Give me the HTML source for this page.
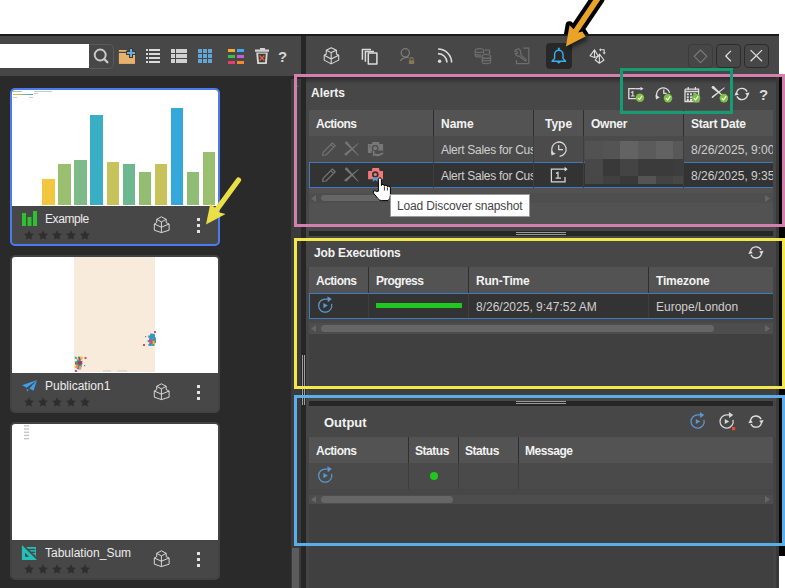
<!DOCTYPE html>
<html><head><meta charset="utf-8">
<style>
*{box-sizing:border-box;margin:0;padding:0}
html,body{width:785px;height:588px;overflow:hidden;background:#fff;position:relative;font-family:"Liberation Sans",sans-serif}
.a{position:absolute}
.t{position:absolute;white-space:nowrap;line-height:1}
svg{position:absolute;overflow:visible}
.hd{position:absolute;white-space:nowrap;line-height:1;font-weight:bold;font-size:12px;color:#f2f2f2}
.cell{position:absolute;white-space:nowrap;line-height:1;font-size:12px;color:#cfcfcf}
.sep{position:absolute;width:1px;background:#2f2f2f}
.star{position:absolute;font-size:11px;color:#2f2f2f;line-height:1}
</style></head><body>

<!-- top dark line -->
<div class="a" style="left:0;top:34px;width:779px;height:2px;background:#1c1c1c"></div>
<!-- left toolbar -->
<div class="a" style="left:0;top:36px;width:301px;height:40px;background:#474747"></div>
<!-- left panel -->
<div class="a" style="left:0;top:76px;width:291px;height:512px;background:#2a2a2a"></div>
<!-- left panel scroll strip -->
<div class="a" style="left:291px;top:76px;width:10px;height:3px;background:#262626"></div>
<div class="a" style="left:291px;top:79px;width:10px;height:509px;background:#3b3b3b"></div>
<svg style="left:293px;top:83px" width="6" height="5"><path d="M0 4 L3 0.5 L6 4Z" fill="#5a5a5a"/></svg>
<div class="a" style="left:292px;top:548px;width:7px;height:40px;background:#5c5c5c"></div>
<!-- divider -->
<div class="a" style="left:301px;top:36px;width:5px;height:552px;background:#262626"></div>
<!-- right toolbar -->
<div class="a" style="left:306px;top:36px;width:473px;height:40px;background:#474747"></div>
<!-- right black strip -->
<div class="a" style="left:779px;top:74px;width:6px;height:482px;background:#050505"></div>

<!-- right panel bg -->
<div class="a" style="left:306px;top:76px;width:473px;height:512px;background:#404040"></div>
<div class="a" style="left:776px;top:76px;width:3px;height:512px;background:#393939"></div>
<div class="a" style="left:306px;top:76px;width:3px;height:512px;background:#454545"></div>
<div class="a" style="left:773px;top:76px;width:3px;height:512px;background:#444"></div>

<!-- ============ ALERTS PANEL ============ -->
<div class="a" style="left:306px;top:77px;width:470px;height:154px;background:#474747"></div>
<div class="a" style="left:306px;top:77px;width:470px;height:7px;background:linear-gradient(#2c2c2c,#474747)"></div>
<div class="hd" style="left:311px;top:87px;font-size:12px">Alerts</div>
<!-- table -->
<div class="a" style="left:309px;top:110px;width:464px;height:26px;background:#535353"></div>
<div class="a" style="left:309px;top:136px;width:464px;height:26px;background:#4b4b4b"></div>
<div class="a" style="left:309px;top:162px;width:464px;height:26px;background:#333;border:1px solid #3d7bc0;border-right:none"></div>
<div class="a" style="left:309px;top:188px;width:464px;height:39px;background:#525252"></div>
<div class="a" style="left:309px;top:193px;width:464px;height:10px;background:#4e4e4e"></div>
<div class="a" style="left:321px;top:195px;width:120px;height:6px;background:#666;border-radius:3px"></div>
<svg style="left:311px;top:195px" width="6" height="7"><path d="M5 0 L0 3.5 L5 7Z" fill="#666"/></svg>
<svg style="left:765px;top:195px" width="6" height="7"><path d="M0 0 L5 3.5 L0 7Z" fill="#666"/></svg>

<div class="sep" style="left:433px;top:110px;height:26px"></div>
<div class="sep" style="left:533px;top:110px;height:26px"></div>
<div class="sep" style="left:583px;top:110px;height:26px"></div>
<div class="sep" style="left:683px;top:110px;height:26px"></div>
<div class="sep" style="left:433px;top:136px;height:52px;background:#3e3e3e"></div>
<div class="sep" style="left:533px;top:136px;height:52px;background:#3e3e3e"></div>
<div class="sep" style="left:583px;top:136px;height:52px;background:#3e3e3e"></div>
<div class="sep" style="left:683px;top:136px;height:52px;background:#3e3e3e"></div>

<div class="hd" style="left:316px;top:118px;letter-spacing:-0.5px">Actions</div>
<div class="hd" style="left:441px;top:118px">Name</div>
<div class="hd" style="left:545px;top:118px">Type</div>
<div class="hd" style="left:591px;top:118px;letter-spacing:-0.25px">Owner</div>
<div class="hd" style="left:691px;top:118px;letter-spacing:-0.2px">Start Date</div>

<div class="a" style="left:434px;top:136px;width:99px;height:52px;overflow:hidden">
  <div class="cell" style="left:7px;top:8px;letter-spacing:-0.28px">Alert Sales for Customers</div>
  <div class="cell" style="left:7px;top:34px;letter-spacing:-0.28px">Alert Sales for Customers</div>
</div>
<div class="a" style="left:684px;top:136px;width:89px;height:52px;overflow:hidden">
  <div class="cell" style="left:7px;top:8px">8/26/2025, 9:00 AM</div>
  <div class="cell" style="left:7px;top:34px">8/26/2025, 9:35 AM</div>
</div>
<!-- owner mosaic -->
<div class="a" style="left:585px;top:141px;width:18px;height:18px;background:#525252"></div>
<div class="a" style="left:603px;top:141px;width:17px;height:18px;background:#545454"></div>
<div class="a" style="left:620px;top:141px;width:18px;height:18px;background:#636363"></div>
<div class="a" style="left:638px;top:141px;width:18px;height:18px;background:#5b5b5b"></div>
<div class="a" style="left:656px;top:141px;width:17px;height:18px;background:#626262"></div>
<div class="a" style="left:673px;top:141px;width:10px;height:18px;background:#585858"></div>
<div class="a" style="left:585px;top:159px;width:18px;height:17px;background:#484848"></div>
<div class="a" style="left:603px;top:159px;width:17px;height:17px;background:#393939"></div>
<div class="a" style="left:620px;top:159px;width:18px;height:17px;background:#444444"></div>
<div class="a" style="left:638px;top:159px;width:18px;height:17px;background:#3b3b3b"></div>
<div class="a" style="left:656px;top:159px;width:17px;height:17px;background:#3b3b3b"></div>
<div class="a" style="left:673px;top:159px;width:10px;height:17px;background:#3d3d3d"></div>
<div class="a" style="left:585px;top:176px;width:18px;height:8px;background:#474747"></div>
<div class="a" style="left:603px;top:176px;width:17px;height:8px;background:#404040"></div>
<div class="a" style="left:620px;top:176px;width:18px;height:8px;background:#393939"></div>
<div class="a" style="left:638px;top:176px;width:18px;height:8px;background:#545454"></div>
<div class="a" style="left:656px;top:176px;width:17px;height:8px;background:#434343"></div>
<div class="a" style="left:673px;top:176px;width:10px;height:8px;background:#474747"></div>

<!-- ============ SPLITTER 1 ============ -->
<div class="a" style="left:309px;top:231px;width:464px;height:5px;background:#262626"></div>
<div class="a" style="left:516px;top:232px;width:50px;height:1px;background:#9a9a9a"></div>
<div class="a" style="left:516px;top:234px;width:50px;height:1px;background:#9a9a9a"></div>

<!-- ============ JOB PANEL ============ -->
<div class="a" style="left:306px;top:236px;width:470px;height:31px;background:#474747"></div>
<div class="hd" style="left:314px;top:247px;font-size:12px;letter-spacing:-0.15px">Job Executions</div>
<div class="a" style="left:309px;top:267px;width:464px;height:26px;background:#535353"></div>
<div class="a" style="left:309px;top:293px;width:464px;height:26px;background:#333;border:1px solid #3d7bc0;border-right:none"></div>
<div class="a" style="left:309px;top:319px;width:464px;height:4px;background:#474747"></div>
<div class="a" style="left:309px;top:323px;width:464px;height:11px;background:#4d4d4d"></div>
<div class="a" style="left:321px;top:325px;width:393px;height:7px;background:#666;border-radius:3.5px"></div>
<svg style="left:311px;top:325px" width="6" height="7"><path d="M5 0 L0 3.5 L5 7Z" fill="#666"/></svg>
<svg style="left:765px;top:325px" width="6" height="7"><path d="M0 0 L5 3.5 L0 7Z" fill="#666"/></svg>
<div class="sep" style="left:368px;top:267px;height:26px"></div>
<div class="sep" style="left:468px;top:267px;height:26px"></div>
<div class="sep" style="left:648px;top:267px;height:26px"></div>
<div class="sep" style="left:368px;top:294px;height:24px;background:#3e3e3e"></div>
<div class="sep" style="left:468px;top:294px;height:24px;background:#3e3e3e"></div>
<div class="sep" style="left:648px;top:294px;height:24px;background:#3e3e3e"></div>
<div class="hd" style="left:316px;top:275px;letter-spacing:-0.5px">Actions</div>
<div class="hd" style="left:376px;top:275px;letter-spacing:-0.6px">Progress</div>
<div class="hd" style="left:476px;top:275px;letter-spacing:-0.2px">Run-Time</div>
<div class="hd" style="left:656px;top:275px;letter-spacing:-0.2px">Timezone</div>
<div class="a" style="left:376px;top:303px;width:86px;height:5px;background:#1ec81e"></div>
<div class="cell" style="left:476px;top:301px">8/26/2025, 9:47:52 AM</div>
<div class="cell" style="left:656px;top:301px">Europe/London</div>

<div class="a" style="left:302px;top:355px;width:1px;height:50px;background:#a0a0a0"></div>
<div class="a" style="left:304px;top:355px;width:1px;height:50px;background:#a0a0a0"></div>
<!-- ============ SPLITTER 2 ============ -->
<div class="a" style="left:306px;top:398px;width:470px;height:3px;background:#474747"></div>
<div class="a" style="left:309px;top:401px;width:464px;height:5px;background:#262626"></div>
<div class="a" style="left:516px;top:401px;width:50px;height:1px;background:#9a9a9a"></div>
<div class="a" style="left:516px;top:403px;width:50px;height:1px;background:#9a9a9a"></div>

<!-- ============ OUTPUT PANEL ============ -->
<div class="a" style="left:306px;top:406px;width:470px;height:31px;background:#474747"></div>
<div class="hd" style="left:324px;top:416px;font-size:13px">Output</div>
<div class="a" style="left:309px;top:437px;width:464px;height:26px;background:#535353"></div>
<div class="a" style="left:309px;top:463px;width:464px;height:26px;background:#4a4a4a"></div>
<div class="a" style="left:309px;top:489px;width:464px;height:6px;background:#474747"></div>
<div class="a" style="left:309px;top:495px;width:464px;height:9px;background:#4d4d4d"></div>
<div class="a" style="left:321px;top:496px;width:132px;height:7px;background:#666;border-radius:3.5px"></div>
<svg style="left:311px;top:496px" width="6" height="7"><path d="M5 0 L0 3.5 L5 7Z" fill="#666"/></svg>
<svg style="left:765px;top:496px" width="6" height="7"><path d="M0 0 L5 3.5 L0 7Z" fill="#666"/></svg>
<div class="sep" style="left:408px;top:437px;height:26px"></div>
<div class="sep" style="left:458px;top:437px;height:26px"></div>
<div class="sep" style="left:518px;top:437px;height:26px"></div>
<div class="sep" style="left:408px;top:463px;height:26px;background:#3e3e3e"></div>
<div class="sep" style="left:458px;top:463px;height:26px;background:#3e3e3e"></div>
<div class="sep" style="left:518px;top:463px;height:26px;background:#3e3e3e"></div>
<div class="hd" style="left:316px;top:445px;letter-spacing:-0.5px">Actions</div>
<div class="hd" style="left:415px;top:445px;letter-spacing:-0.45px">Status</div>
<div class="hd" style="left:465px;top:445px;letter-spacing:-0.45px">Status</div>
<div class="hd" style="left:525px;top:445px;letter-spacing:-0.45px">Message</div>
<div class="a" style="left:430px;top:472px;width:8px;height:8px;border-radius:50%;background:#1ec81e"></div>


<!-- ============ PANEL ICONS ============ -->
<svg style="left:0;top:0" width="785" height="588">
 <!-- alerts header icons -->
 <g fill="none" stroke="#dedede" stroke-width="1.3">
  <path d="M635.3 88.7 H628.8 V98.6 H636"/>
  <path d="M635.3 88.7 H640.8"/>
  <path d="M631 92.4 L632.8 91.6 V96 M631 96 H634.6" stroke-width="1.1"/>
  <path d="M656.8 96.3 A6.6 6.6 0 1 1 669.6 92.8"/>
  <path d="M663.8 89.4 V93.3 H666.6"/>
  <path d="M685 89.2 V101.5 H698.6 V89.2 H685 M685 91.5 H698.6 M688.2 87 V90 M695.4 87 V90"/>
 </g>
 <path d="M640.5 86.8 L643.5 88.7 L640.5 90.6 Z" fill="#dedede"/>
 <path d="M655.4 95 L659.8 97.2 L656 99.6 Z" fill="#dedede"/>
 <g fill="#dedede">
  <rect x="686.8" y="93.3" width="2" height="2"/><rect x="690" y="93.3" width="2" height="2"/><rect x="693.2" y="93.3" width="3" height="1"/>
  <rect x="686.8" y="96.3" width="2" height="2"/><rect x="690" y="96.3" width="2" height="2"/>
  <rect x="686.8" y="99" width="2" height="2"/><rect x="690" y="99" width="2" height="2"/>
 </g>
 <!-- cancel schedule x -->
 <path d="M712.14 88.17 L723.17 96.87 L723.83 96.13 L713.86 86.23 Z" fill="#dedede"/><circle cx="713" cy="87.2" r="1.3" fill="#dedede"/>
 <path d="M712.89 97.83 L724.82 87.88 L724.38 87.32 L711.91 96.57 Z" fill="#dedede"/><circle cx="712.4" cy="97.2" r="0.8" fill="#dedede"/>
 <!-- badges -->
 <g>
  <circle cx="639.9" cy="97.8" r="4.3" fill="#7dc143"/>
  <circle cx="668" cy="98.1" r="4.3" fill="#7dc143"/>
  <circle cx="696" cy="98.1" r="4.3" fill="#7dc143"/>
  <circle cx="723.9" cy="98.1" r="4.3" fill="#7dc143"/>
 </g>
 <g fill="none" stroke="#fff" stroke-width="1.1">
  <path d="M637.8 97.8 L639.5 99.5 L642.2 95.8"/>
  <path d="M665.9 98.1 L667.6 99.8 L670.3 96.1"/>
  <path d="M693.9 98.1 L695.6 99.8 L698.3 96.1"/>
  <path d="M721.8 98.1 L723.5 99.8 L726.2 96.1"/>
 </g>
 <!-- refresh icons -->
 <path d="M736.59 92.55 A5.6 5.6 0 0 1 747.08 91.63 M747.41 95.45 A5.6 5.6 0 0 1 736.92 96.37" fill="none" stroke="#e0e0e0" stroke-width="1.3"/><path d="M745.20 93.20 L749.60 92.40 L747.80 96.40 Z" fill="#e0e0e0"/><path d="M738.80 94.80 L734.40 95.60 L736.20 91.60 Z" fill="#e0e0e0"/>
 <path d="M750.59 250.95 A5.6 5.6 0 0 1 761.08 250.03 M761.41 253.85 A5.6 5.6 0 0 1 750.92 254.77" fill="none" stroke="#e0e0e0" stroke-width="1.3"/><path d="M759.20 251.60 L763.60 250.80 L761.80 254.80 Z" fill="#e0e0e0"/><path d="M752.80 253.20 L748.40 254.00 L750.20 250.00 Z" fill="#e0e0e0"/>
 <path d="M750.59 420.15 A5.6 5.6 0 0 1 761.08 419.23 M761.41 423.05 A5.6 5.6 0 0 1 750.92 423.97" fill="none" stroke="#e0e0e0" stroke-width="1.3"/><path d="M759.20 420.80 L763.60 420.00 L761.80 424.00 Z" fill="#e0e0e0"/><path d="M752.80 422.40 L748.40 423.20 L750.20 419.20 Z" fill="#e0e0e0"/>

 <!-- row icons -->
 <g fill="none" stroke="#707070" stroke-width="1.25" stroke-linejoin="round">
  <path d="M322.6 155.4 L323.2 152.2 L332.4 143 L335.2 145.8 L326 155 Z M330.8 144.6 L333.6 147.4"/>
  <path d="M322.6 181.4 L323.2 178.2 L332.4 169 L335.2 171.8 L326 181 Z M330.8 170.6 L333.6 173.4"/>
 </g>
 <path d="M345.42 143.83 L358.15 155.84 L358.65 155.36 L347.38 141.97 Z" fill="#747474"/><circle cx="346.4" cy="142.9" r="1.35" fill="#747474"/>
 <path d="M346.62 155.24 L358.80 143.43 L358.40 142.97 L344.98 153.36 Z" fill="#747474"/><circle cx="345.8" cy="154.3" r="1.25" fill="#747474"/>
 <path d="M345.42 169.83 L358.15 181.84 L358.65 181.36 L347.38 167.97 Z" fill="#747474"/><circle cx="346.4" cy="168.9" r="1.35" fill="#747474"/>
 <path d="M346.62 181.24 L358.80 169.43 L358.40 168.97 L344.98 179.36 Z" fill="#747474"/><circle cx="345.8" cy="180.3" r="1.25" fill="#747474"/>
 <!-- camera row1 -->
 <path d="M367.9 144 H372 L372.4 141.9 H379 L379.4 144 H383.1 V153 H367.9 Z" fill="#777"/>
 <rect x="369" y="145.8" width="1.6" height="0.9" fill="#5a5a5a"/>
 <path d="M371.6 150.8 V158 L384.6 154.6 L382.6 150.6 Z" fill="#4d4d4d"/>
 <circle cx="375.2" cy="148.3" r="3.4" fill="#4d4d4d"/>
 <circle cx="375.2" cy="148.3" r="2" fill="#777"/>
 <path d="M372.9 150.5 V156.6 L374.3 155.4 Q379 157.6 383.8 153.6 L382.2 152.4 Q379 155 374.6 153.6 V151.2 Z" fill="#777"/>
 <!-- camera row2 -->
 <path d="M368.1 171 H371.8 L372.4 168.1 H379 L379.6 171 H383 V179.3 H368.1 Z" fill="#f07a7a"/>
 <circle cx="375.3" cy="174.5" r="3.3" fill="#333"/>
 <circle cx="375.3" cy="174.5" r="1.6" fill="#f07a7a"/>
 <path d="M372.8 177.3 H377.6 V181.8 L375.2 180 L372.8 181.8 Z" fill="#5a9ad0"/>

 <!-- type icons -->
 <g fill="none" stroke="#d8d8d8" stroke-width="1.25">
  <path d="M552.6 152.6 A7.2 7.2 0 1 1 559.6 156.4"/>
  <path d="M558.7 145 V149.6 H563"/>
  <path d="M563.8 169.2 H551.4 V181.8 H565 V177"/>
  <path d="M563.8 169.2 H566" />
  <path d="M556 173.4 L558 172.4 V178.2 M555.6 178.2 H561"/>
 </g>
 <path d="M550.8 151 L555.8 153.8 L551.6 155.6 Z" fill="#d8d8d8"/>
 <path d="M564.6 166.8 L567.6 169.2 L564.6 171.6 Z" fill="#e0e0e0"/>

 <!-- play-refresh icons -->
 <path d="M703.98 419.79 A6.6 6.6 0 1 1 698.18 414.93 H700.20" fill="none" stroke="#5b98cc" stroke-width="1.25"/><path d="M699.80 412.10 L704.20 414.90 L700.20 418.10 Z" fill="#5b98cc"/><path d="M695.80 418.90 L700.20 421.50 L695.80 424.10 Z" fill="#5b98cc"/>
 <path d="M732.98 419.79 A6.6 6.6 0 1 1 727.18 414.93 H729.20" fill="none" stroke="#d8d8d8" stroke-width="1.25"/><path d="M728.80 412.10 L733.20 414.90 L729.20 418.10 Z" fill="#d8d8d8"/><path d="M724.80 418.90 L729.20 421.50 L724.80 424.10 Z" fill="#d8d8d8"/>
 <path d="M331.58 303.89 A6.6 6.6 0 1 1 325.78 299.03 H327.80" fill="none" stroke="#5b98cc" stroke-width="1.25"/><path d="M327.40 296.20 L331.80 299.00 L327.80 302.20 Z" fill="#5b98cc"/><path d="M323.40 303.00 L327.80 305.60 L323.40 308.20 Z" fill="#5b98cc"/>
 <path d="M331.58 473.89 A6.6 6.6 0 1 1 325.78 469.03 H327.80" fill="none" stroke="#5b98cc" stroke-width="1.25"/><path d="M327.40 466.20 L331.80 469.00 L327.80 472.20 Z" fill="#5b98cc"/><path d="M323.40 473.00 L327.80 475.60 L323.40 478.20 Z" fill="#5b98cc"/>
 <rect x="732" y="427" width="3.2" height="3.2" fill="#f04a2a"/>

 <!-- hand cursor -->
 <path d="M378.4 191.2 V179.6 Q378.4 177.8 379.9 177.8 Q381.4 177.8 381.4 179.6 V185.6 Q381.6 184.4 382.9 184.4 Q384.3 184.4 384.4 186 Q384.6 185.2 385.9 185.2 Q387.3 185.2 387.4 186.8 Q387.6 186.2 388.8 186.2 Q390.4 186.2 390.4 188 V195.2 Q390.4 199 388 200.6 H381.4 Q379.6 200.6 377.6 198.2 L373.6 193.2 Q372.6 191.8 373.8 191 Q375.2 190.2 376.4 191.6 Z" fill="#fff" stroke="#000" stroke-width="1"/>
 <path d="M384.4 186.4 V190.5 M387.4 187.4 V190.5" stroke="#000" stroke-width="0.8"/>
</svg>

<!-- tooltip -->
<div class="a" style="left:390px;top:194px;width:140px;height:23px;background:#fff;border:1px solid #9a9a9a"></div>
<div class="t" style="left:397px;top:200px;font-size:12px;color:#444;letter-spacing:-0.15px">Load Discover snapshot</div>

<div class="t" style="left:759px;top:87px;font-size:15px;font-weight:bold;color:#dcdcdc">?</div>

<!-- ============ LEFT TOOLBAR ============ -->
<div class="a" style="left:0;top:44px;width:89px;height:24px;background:#fff"></div>
<div class="a" style="left:89px;top:43.5px;width:25px;height:25px;border:1.2px solid #5a5a5a;border-left:none;border-radius:0 5px 5px 0"></div>


<!-- ============ LEFT TOOLBAR ICONS ============ -->
<svg style="left:0;top:0" width="785" height="80">
 <g fill="none" stroke="#cbcbcb" stroke-width="1.9">
  <circle cx="100.2" cy="55" r="5.5"/>
  <path d="M104.2 59 L107.4 62.2" stroke-width="2.3" stroke-linecap="round"/>
 </g>
  <!-- folder -->
 <path d="M118.9 49.9 H126.2 L127.9 51.8 H118.9 Z" fill="#eeb56e"/>
 <path d="M118.9 53 H135 V63.9 H118.9 Z" fill="#e8b26c"/>
 <path d="M126 51 H136 V55 H133 V58 H129 V55 H126 Z M129 48 H133 V51 H129 Z" fill="#3a3a3a"/>
 <path d="M127 52 H135 V54 H127 Z M130 49 H132 V57 H130 Z" fill="#68aee0"/>
 <!-- list1 -->
 <g fill="#dcdcdc">
  <rect x="146" y="49" width="2" height="2"/><rect x="149" y="49" width="11" height="2"/>
  <rect x="146" y="53" width="2" height="2"/><rect x="149" y="53" width="11" height="2"/>
  <rect x="146" y="57" width="2" height="2"/><rect x="149" y="57" width="11" height="2"/>
  <rect x="146" y="61" width="2" height="2"/><rect x="149" y="61" width="11" height="2"/>
 </g>
 <!-- list2 -->
 <g fill="#d2d2d2">
  <rect x="171" y="49" width="4" height="4"/><rect x="176" y="49" width="11" height="4"/>
  <rect x="171" y="54" width="4" height="4"/><rect x="176" y="54" width="11" height="4"/>
  <rect x="171" y="59" width="4" height="4"/><rect x="176" y="59" width="11" height="4"/>
 </g>
 <!-- grid -->
 <g fill="#62a6d8">
  <rect x="198" y="49" width="4" height="4"/><rect x="203" y="49" width="4" height="4"/><rect x="208" y="49" width="4" height="4"/>
  <rect x="198" y="54" width="4" height="4"/><rect x="203" y="54" width="4" height="4"/><rect x="208" y="54" width="4" height="4"/>
  <rect x="198" y="59" width="4" height="4"/><rect x="203" y="59" width="4" height="4"/><rect x="208" y="59" width="4" height="4"/>
 </g>
 <!-- colourful -->
 <rect x="228" y="49" width="7" height="3" fill="#f8aa2e"/><rect x="237" y="49" width="7" height="3" fill="#3eaaf0"/>
 <rect x="228" y="55" width="7" height="3" fill="#3ec03e"/><rect x="237" y="55" width="7" height="3" fill="#c060d8"/>
 <rect x="228" y="61" width="7" height="3" fill="#e83c74"/><rect x="237" y="61" width="7" height="3" fill="#f8882a"/>
 <!-- trash -->
 <path d="M260 48 H265 V49.6 H269 V51.8 H255 V49.6 H260 Z" fill="#d4d4d4"/>
 <path d="M256.2 52.5 H267.8 L266.8 64 H257.2 Z" fill="#d4d4d4"/>
 <path d="M258.2 53.8 H265.8 L265 62.3 H259 Z" fill="#3c3c3c"/>
 <path d="M259.6 55.5 L264.4 60.5 M264.4 55.5 L259.6 60.5" stroke="#e8663a" stroke-width="1.2"/>
</svg>
<div class="t" style="left:278px;top:49px;font-size:15px;font-weight:bold;color:#d6d6d6">?</div>

<!-- ============ RIGHT TOOLBAR ICONS ============ -->
<svg style="left:0;top:0" width="785" height="80">
 <g fill="none" stroke="#dcdcdc" stroke-width="1.3" stroke-linejoin="round">
  <!-- cube -->
  <path d="M331.2 47.7 L336.4 50.2 V54 L338.7 55.3 V60.1 L331.2 63.9 L324.2 60.1 V55.3 L326.3 54 V50.2 Z" stroke-width="1.05"/>
  <path d="M326.3 50.2 L331.2 52.6 L336.4 50.2 M331.2 52.6 V63.9 M324.2 55.3 L331.2 59 L338.7 55.3" stroke-width="1.05"/>
  <!-- copy -->
  <path d="M362.4 59.7 V49.4 H371" stroke-width="1.5"/>
  <path d="M365.4 61.8 V51.6 H374" stroke-width="1.5"/>
  <rect x="368.3" y="53.1" width="8.6" height="10.8" stroke-width="1.5"/>
  <!-- rss -->
  <path d="M438 53.6 A9 9 0 0 1 447 62.6" stroke-width="1.6"/>
  <path d="M438 49 A13.6 13.6 0 0 1 451.6 62.6" stroke-width="1.6"/>
  <!-- pyramids -->
  <path d="M594.5 49.8 L590 55.8 L594.5 57.6 L598.3 56.2 Z M594.5 49.8 V57.6" stroke-width="1.1"/>
  <path d="M599.4 54.2 L595.2 60 L599.4 63.3 L604 60 Z M599.4 54.2 V63.3" stroke-width="1.1"/>
  <path d="M600.6 49.8 H604.2 V53" stroke-width="1.1"/>
 </g>
 <circle cx="439.6" cy="61.2" r="1.7" fill="#dcdcdc"/>
 <path d="M599 49.8 L601 48.2 V51.4 Z M602.6 52.6 H605.8 L604.2 54.4 Z" fill="#dcdcdc"/>
 <!-- user lock -->
 <g fill="none" stroke="#7a7a7a" stroke-width="1.3">
  <circle cx="405.3" cy="52.8" r="4.1"/>
  <path d="M400.4 60.8 Q403 57 408.8 57.4"/>
 </g>
 <rect x="408.9" y="60.3" width="5.3" height="3.7" fill="#8a7452"/>
 <path d="M410 60.5 V59.2 A1.6 1.6 0 0 1 413.2 59.2 V60.5" fill="none" stroke="#8a7452" stroke-width="1.1"/>
 <!-- db sync -->
 <g fill="none" stroke="#6e6e6e" stroke-width="1.2">
  <path d="M481.5 56.8 H477.2 Q475.2 56.8 475.2 55 V50.6 Q475.2 48.7 479.4 48.7 Q483.6 48.7 483.6 50.6 V53.4"/>
  <path d="M475.2 51.7 Q479.4 53.3 483.6 51.7 M475.2 54.4 Q478 55.6 481.5 55"/>
  <path d="M482.2 56.2 Q482.2 54.3 486.4 54.3 Q490.6 54.3 490.6 56.2 V61.8 Q490.6 63.7 486.4 63.7 Q482.2 63.7 482.2 61.8 Z"/>
  <path d="M482.2 57.6 Q486.4 59.2 490.6 57.6 M482.2 60 Q486.4 61.6 490.6 60"/>
  <path d="M485.5 50 H489.5 V53"/>
 </g>
 <path d="M484.5 50 L486.3 48.5 V51.5 Z M488 52.2 H491 L489.5 54 Z" fill="#6e6e6e"/>
 <!-- wrench -->
 <g fill="none" stroke="#6e6e6e" stroke-width="1.2">
  <path d="M523.4 48.2 H528.8 V63.6 H516.4 V60"/>
  <path d="M518.7 48.8 Q515.8 48.8 514.6 51 L516.6 51.4 L517.5 53.3 L515.2 53.7 Q516 56.5 519 56 L524.8 60.6 Q526 61.4 526.2 60 L520.6 54.6 Q521.5 51 518.7 48.8 Z"/>
 </g>
</svg>
<!-- bell button -->
<div class="a" style="left:546px;top:43px;width:26px;height:25.5px;background:#282828;border-radius:4px"></div>
<svg style="left:0;top:0" width="785" height="80">
 <g fill="none" stroke="#3ab0f0" stroke-width="1.4" stroke-linejoin="round">
  <path d="M554.6 58.4 V54.4 A4.2 4.2 0 0 1 563 54.4 V58.4 L565.6 61.3 H552 Z"/>
  <path d="M558.8 50.3 V48.6"/>
 </g>
 <circle cx="558.8" cy="48.6" r="1" fill="#3ab0f0"/>
 <path d="M556.8 62 H560.8 L558.8 63.8 Z" fill="#3ab0f0"/>
</svg>
<!-- right buttons -->
<div class="a" style="left:688px;top:44px;width:25px;height:24px;border:1px solid #3b3b3b;border-radius:4px"></div>
<div class="a" style="left:716px;top:44px;width:24.5px;height:24px;border:1.5px solid #2c2c2c;border-radius:4px"></div>
<div class="a" style="left:744px;top:44px;width:24.5px;height:24px;border:1.5px solid #2c2c2c;border-radius:4px"></div>
<svg style="left:0;top:0" width="785" height="80">
 <path d="M700.5 50 L706.8 56.3 L700.5 62.6 L694.2 56.3 Z" fill="none" stroke="#7a7a7a" stroke-width="1.1"/>
 <path d="M730.9 50.9 L725.8 56 L730.9 61.2" fill="none" stroke="#dcdcdc" stroke-width="1.3"/>
 <path d="M750.6 50.1 L762 61.3 M762 50.1 L750.6 61.3" fill="none" stroke="#dcdcdc" stroke-width="1.3"/>
</svg>

<!-- ============ CARDS ============ -->
<div class="a" style="left:10px;top:88px;width:210px;height:158px;border:2px solid #4a7cf0;border-radius:5px;background:#474747;overflow:hidden">
  <div class="a" style="left:0;top:0;width:206px;height:116px;background:#fff"></div>
</div>
<div class="a" style="left:10px;top:255px;width:210px;height:158px;border:2px solid #424242;border-radius:5px;background:#474747;overflow:hidden">
  <div class="a" style="left:0;top:0;width:206px;height:116px;background:#fff"></div>
  <div class="a" style="left:62px;top:0;width:81px;height:115px;background:#f9ebdc"></div>
</div>
<div class="a" style="left:10px;top:422px;width:210px;height:158px;border:2px solid #424242;border-radius:5px;background:#474747;overflow:hidden">
  <div class="a" style="left:0;top:0;width:206px;height:116px;background:#fff"></div>
</div>


<!-- chart bars card1 -->
<div class="a" style="left:42px;top:179px;width:12.6px;height:26px;background:#f2c73e"></div>
<div class="a" style="left:58.2px;top:163.7px;width:12.6px;height:41.3px;background:#9abf6f"></div>
<div class="a" style="left:74.2px;top:159.7px;width:12.6px;height:45.3px;background:#7fbb88"></div>
<div class="a" style="left:90.4px;top:114.8px;width:12.6px;height:90.2px;background:#3aaec4"></div>
<div class="a" style="left:106.5px;top:162px;width:12.6px;height:43px;background:#c5c35a"></div>
<div class="a" style="left:122.6px;top:163.7px;width:12.6px;height:41.3px;background:#6db890"></div>
<div class="a" style="left:138.6px;top:171.7px;width:12.6px;height:33.3px;background:#94bd72"></div>
<div class="a" style="left:154.7px;top:164.2px;width:12.6px;height:40.8px;background:#c7c25a"></div>
<div class="a" style="left:170.7px;top:108.3px;width:12.6px;height:96.7px;background:#33a8d9"></div>
<div class="a" style="left:186.8px;top:172px;width:12.6px;height:33px;background:#8fbd74"></div>
<div class="a" style="left:202.8px;top:152.2px;width:12.6px;height:52.8px;background:#9abf6f"></div>
<!-- tiny legend -->
<div class="a" style="left:13px;top:91px;width:9px;height:1px;background:#bbb"></div>
<div class="a" style="left:13px;top:94px;width:20px;height:1.3px;background:linear-gradient(90deg,#e8c63a,#2aa8c8)"></div>
<div class="a" style="left:13px;top:96.5px;width:4px;height:1px;background:#ccc"></div>
<div class="a" style="left:29px;top:96.5px;width:4px;height:1px;background:#ccc"></div>
<div class="a" style="left:34px;top:91px;width:18px;height:1px;background:#c8c8c8"></div>
<div class="a" style="left:34px;top:93px;width:4px;height:1px;background:#ccc"></div>

<!-- card2 blobs -->
<svg style="left:0;top:0" width="300" height="588">
 <g>
  <rect x="149.0" y="338.4" width="2.5" height="2" fill="#e8407a"/>
  <rect x="151.4" y="333.9" width="3.5" height="3.5" fill="#2aa0b0"/>
  <rect x="150.5" y="340.3" width="3.5" height="3.5" fill="#f5b040"/>
  <rect x="151.1" y="335.3" width="3.5" height="3" fill="#2aa0b0"/>
  <rect x="147.6" y="340.1" width="3" height="2" fill="#2aa0b0"/>
  <rect x="152.3" y="340.6" width="3.5" height="2.5" fill="#30a070"/>
  <rect x="153.1" y="338.3" width="2.5" height="3.5" fill="#c8285a"/>
  <rect x="152.1" y="343.0" width="2.5" height="2.5" fill="#2aa0b0"/>
  <rect x="148.4" y="343.9" width="3.5" height="2" fill="#3c90c8"/>
  <rect x="151.6" y="342.9" width="3" height="2" fill="#f5b040"/>
  <rect x="149.0" y="339.2" width="3.5" height="2.5" fill="#e8407a"/>
  <rect x="149.9" y="341.2" width="3.5" height="2" fill="#e8407a"/>
  <rect x="149.3" y="342.3" width="3.5" height="2.5" fill="#3c90c8"/>
  <rect x="149.9" y="338.6" width="3" height="2" fill="#3c90c8"/>
  <rect x="149.7" y="340.0" width="2.5" height="3.5" fill="#e8407a"/>
  <rect x="152.1" y="342.8" width="2" height="3" fill="#30a070"/>
  <rect x="148.3" y="335.4" width="3.5" height="2.5" fill="#2aa0b0"/>
  <rect x="149.9" y="336.6" width="2.5" height="2.5" fill="#3c90c8"/>
  <rect x="152.5" y="339.3" width="3" height="3.5" fill="#30a070"/>
  <rect x="152.6" y="340.8" width="2" height="3.5" fill="#f5b040"/>
  <rect x="150.1" y="333.6" width="2.5" height="2.5" fill="#3c90c8"/>
  <rect x="152.7" y="337.3" width="3" height="2.5" fill="#3c90c8"/>
  <rect x="74.6" y="366.0" width="2" height="2" fill="#f5b040"/>
  <rect x="77.6" y="362.7" width="3" height="3" fill="#30a070"/>
  <rect x="78.2" y="364.4" width="2.5" height="3.5" fill="#3c90c8"/>
  <rect x="77.0" y="365.5" width="3" height="3.5" fill="#3c90c8"/>
  <rect x="77.3" y="359.5" width="2" height="3" fill="#e8407a"/>
  <rect x="77.1" y="358.7" width="3.5" height="2.5" fill="#2aa0b0"/>
  <rect x="75.1" y="361.6" width="2.5" height="3" fill="#c8285a"/>
  <rect x="79.2" y="363.7" width="2.5" height="3.5" fill="#3c90c8"/>
  <rect x="76.2" y="365.4" width="3" height="3" fill="#e8407a"/>
  <rect x="78.6" y="360.8" width="2.5" height="3.5" fill="#30a070"/>
  <rect x="75.8" y="361.2" width="2.5" height="3.5" fill="#30a070"/>
  <rect x="79.4" y="360.8" width="3" height="3.5" fill="#30a070"/>
  <rect x="77.6" y="365.9" width="3.5" height="3.5" fill="#3c90c8"/>
  <rect x="79.0" y="361.3" width="2.5" height="3" fill="#c8285a"/>
  <rect x="78.0" y="361.4" width="3.5" height="3" fill="#c8285a"/>
  <rect x="79.1" y="366.0" width="2" height="3" fill="#f0a030"/>
  <rect x="78.0" y="356.6" width="2" height="2" fill="#30a070"/>
  <rect x="78.9" y="357.6" width="2.5" height="2" fill="#c8285a"/>
  <rect x="80.1" y="356.7" width="2.5" height="2.5" fill="#f5b040"/>
  <rect x="76.5" y="358.1" width="2" height="2" fill="#f5b040"/>
  <rect x="74.8" y="356.8" width="2" height="2" fill="#2aa0b0"/>
  <rect x="75.8" y="364.9" width="2" height="3" fill="#f0a030"/>
  <rect x="154" y="331" width="2" height="2" fill="#e8407a"/>
  <rect x="143" y="344" width="2" height="2" fill="#e8407a"/>
  <rect x="145" y="336" width="1.2" height="1.2" fill="#3c90c8"/>
  <rect x="84.5" y="357" width="2" height="2" fill="#e8407a"/>
  <rect x="75" y="370" width="2" height="2" fill="#e8407a"/>
  <rect x="84" y="365" width="1.2" height="1.2" fill="#3c90c8"/>
 </g>
 <rect x="103" y="370.6" width="8" height="0.8" fill="#c8c0b8"/>
 <rect x="117.5" y="370.6" width="9.5" height="0.8" fill="#c8c0b8"/>
 <!-- card3 tiny text -->
 <g fill="#c4c4c4">
  <rect x="24" y="425.2" width="5" height="1.3"/>
  <rect x="24" y="428.4" width="5" height="1.3"/>
  <rect x="24" y="431.6" width="5" height="1.3"/>
  <rect x="24" y="434.8" width="5" height="1.3"/>
  <rect x="24" y="438" width="5" height="1.3"/>
 </g>
</svg>

<!-- card footers -->
<svg style="left:0;top:0" width="300" height="588">
 <!-- bar icon -->
 <rect x="22" y="213" width="4" height="13" fill="#2ec02e"/>
 <rect x="27.5" y="217" width="4" height="9" fill="#2ec02e"/>
 <rect x="33" y="211" width="4" height="15" fill="#2ec02e"/>
 <!-- paper plane -->
 <path d="M22.1 385.2 L37 380.1 L26.6 387.8 Z" fill="#3da0ee"/>
 <path d="M37 380.1 L33.5 390.8 L29.4 388.4 Z" fill="#3da0ee"/>
 <path d="M26.4 389.4 L28.7 389.2 L27.3 391.7 Z" fill="#3da0ee"/>
 <!-- tabulation icon -->
 <path d="M21.9 544.9 L37 560 H21.9 Z M25.1 552.8 V556.7 H29.1 Z" fill="#22c0b6" fill-rule="evenodd"/>
 <clipPath id="tc"><path d="M24.2 544.9 H37.5 V558.2 Z"/></clipPath>
 <g fill="#22c0b6" clip-path="url(#tc)">
  <rect x="20" y="547" width="16" height="1.8"/>
  <rect x="20" y="550.1" width="16" height="1.5"/>
  <rect x="20" y="553" width="16" height="1.5"/>
  <rect x="35.2" y="547" width="0.8" height="11"/>
 </g>
 <!-- cubes -->
 <g fill="none" stroke="#dedede" stroke-width="0.95" stroke-linejoin="round">
  <path id="cb" d="M161.4 216.8 L166.2 219.3 V222.6 L169.1 224 V230.2 L161.4 232.6 L154.3 230.2 V224 L156.7 222.6 V219.3 Z M156.7 219.3 L161.4 221.9 L166.2 219.3 M161.4 221.9 V232.6 M154.3 224 L161.4 227.2 L169.1 224"/>
  <use href="#cb" y="167"/>
  <use href="#cb" y="334"/>
 </g>
 <!-- dots -->
 <g fill="#e4e4e4">
  <rect x="197" y="218" width="3" height="3"/><rect x="197" y="224" width="3" height="3"/><rect x="197" y="230" width="3" height="3"/>
  <rect x="197" y="385" width="3" height="3"/><rect x="197" y="391" width="3" height="3"/><rect x="197" y="397" width="3" height="3"/>
  <rect x="197" y="552" width="3" height="3"/><rect x="197" y="558" width="3" height="3"/><rect x="197" y="564" width="3" height="3"/>
 </g>
 <!-- stars -->
 <g fill="#2e2e2e">
  <path id="st" d="M29.00 230.80 L30.41 233.56 L33.47 234.05 L31.28 236.24 L31.76 239.30 L29.00 237.90 L26.24 239.30 L26.72 236.24 L24.53 234.05 L27.59 233.56 Z" stroke="#2e2e2e" stroke-width="0.3" stroke-linejoin="round"/>
  <use href="#st" x="14"/><use href="#st" x="28"/><use href="#st" x="42"/><use href="#st" x="56"/>
  <use href="#st" y="167"/><use href="#st" x="14" y="167"/><use href="#st" x="28" y="167"/><use href="#st" x="42" y="167"/><use href="#st" x="56" y="167"/>
  <use href="#st" y="334"/><use href="#st" x="14" y="334"/><use href="#st" x="28" y="334"/><use href="#st" x="42" y="334"/><use href="#st" x="56" y="334"/>
 </g>
</svg>

<div class="t" style="left:45px;top:213px;font-size:12px;color:#ececec;letter-spacing:-0.4px">Example</div>
<div class="t" style="left:45px;top:380px;font-size:12px;color:#ececec">Publication1</div>
<div class="t" style="left:45px;top:547px;font-size:12px;color:#ececec">Tabulation_Sum</div>

<!-- ============ ANNOTATION BOXES ============ -->
<div class="a" style="left:294px;top:74px;width:491px;height:153px;border:3px solid #d280ad"></div>
<div class="a" style="left:294px;top:238px;width:491px;height:151px;border:3px solid #f2e84c"></div>
<div class="a" style="left:294px;top:395px;width:491px;height:151px;border:3px solid #5aaeea"></div>
<div class="a" style="left:620px;top:68px;width:113px;height:46px;border:3px solid #169c72"></div>
<div class="a" style="left:779px;top:556px;width:6px;height:32px;background:#fff"></div>


<!-- ============ ARROWS ============ -->
<svg style="left:0;top:0" width="785" height="588">
 <!-- yellow arrow -->
 <path d="M238.5 180 L216.5 210" stroke="#ebdf48" stroke-width="5.2" stroke-linecap="round" fill="none"/>
 <path d="M206 224.6 L210.3 203.7 L214.6 207.6 L219.5 212.4 L225.6 213.9 Z" fill="#ebdf48"/>
</svg>
<div class="a" style="left:540px;top:0;width:80px;height:34px;overflow:hidden">
<svg style="left:-540px;top:0" width="785" height="60">
 <path d="M565.9 46.6 L569.5 25.3 L573.6 29.3 L595.6 -3.5 L600.4 -0.3 L578.2 32.6 L582.4 31.6 L585.6 36.6 Z" fill="#000" stroke="#000" stroke-width="8" stroke-linejoin="round"/>
</svg>
</div>
<div class="a" style="left:540px;top:36px;width:80px;height:30px;overflow:hidden">
<svg style="left:-540px;top:-36px" width="785" height="80">
 <defs><filter id="bl" x="-50%" y="-50%" width="200%" height="200%"><feGaussianBlur stdDeviation="2.2"/></filter></defs>
 <path d="M565.9 46.6 L569.5 25.3 L573.6 29.3 L595.6 -3.5 L600.4 -0.3 L578.2 32.6 L582.4 31.6 L585.6 36.6 Z" fill="#000" opacity="0.55" filter="url(#bl)" transform="translate(2.5,3)"/>
</svg>
</div>
<svg style="left:0;top:0" width="785" height="60">
 <path d="M565.9 46.6 L569.5 25.3 L573.6 29.3 L595.6 -3.5 L600.4 -0.3 L578.2 32.6 L582.4 31.6 L585.6 36.6 Z" fill="#e8a328"/>
</svg>

</body></html>
